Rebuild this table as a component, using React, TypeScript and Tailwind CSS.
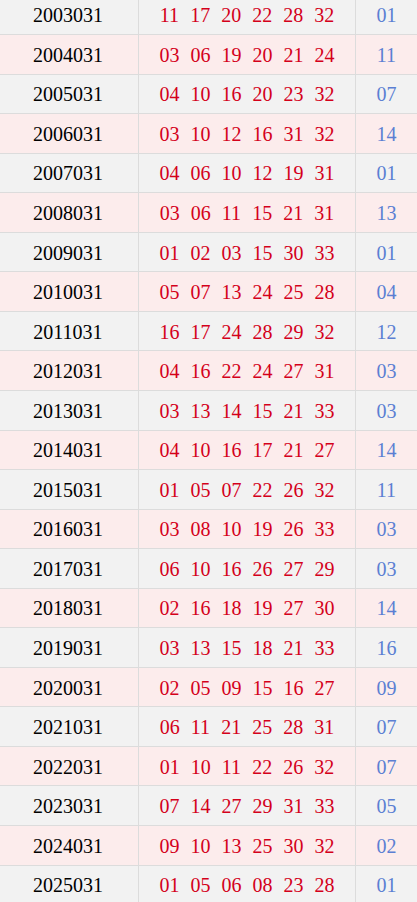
const rows: [string, string[], string][] = [
  ['2003031', ['11', '17', '20', '22', '28', '32'], '01'],
  ['2004031', ['03', '06', '19', '20', '21', '24'], '11'],
  ['2005031', ['04', '10', '16', '20', '23', '32'], '07'],
  ['2006031', ['03', '10', '12', '16', '31', '32'], '14'],
  ['2007031', ['04', '06', '10', '12', '19', '31'], '01'],
  ['2008031', ['03', '06', '11', '15', '21', '31'], '13'],
  ['2009031', ['01', '02', '03', '15', '30', '33'], '01'],
  ['2010031', ['05', '07', '13', '24', '25', '28'], '04'],
  ['2011031', ['16', '17', '24', '28', '29', '32'], '12'],
  ['2012031', ['04', '16', '22', '24', '27', '31'], '03'],
  ['2013031', ['03', '13', '14', '15', '21', '33'], '03'],
  ['2014031', ['04', '10', '16', '17', '21', '27'], '14'],
  ['2015031', ['01', '05', '07', '22', '26', '32'], '11'],
  ['2016031', ['03', '08', '10', '19', '26', '33'], '03'],
  ['2017031', ['06', '10', '16', '26', '27', '29'], '03'],
  ['2018031', ['02', '16', '18', '19', '27', '30'], '14'],
  ['2019031', ['03', '13', '15', '18', '21', '33'], '16'],
  ['2020031', ['02', '05', '09', '15', '16', '27'], '09'],
  ['2021031', ['06', '11', '21', '25', '28', '31'], '07'],
  ['2022031', ['01', '10', '11', '22', '26', '32'], '07'],
  ['2023031', ['07', '14', '27', '29', '31', '33'], '05'],
  ['2024031', ['09', '10', '13', '25', '30', '32'], '02'],
  ['2025031', ['01', '05', '06', '08', '23', '28'], '01'],
];

export default function App() {
  return (
    <div className="h-[902px] w-[417px] overflow-hidden bg-[#f2f2f2] font-['Liberation_Serif','Noto_Sans_CJK_SC',serif] text-[20px]">
      <div className="-mt-[4.5px]">
        {rows.map(([issue, reds, blue], i) => (
          <div
            key={issue}
            className={
              'flex h-[39.55px] border-b border-[#dcdcdc] ' + (i % 2 === 0 ? 'bg-[#f2f2f2]' : 'bg-[#fcecec]')
            }
          >
            <div className="flex w-[139px] shrink-0 items-center justify-center border-r border-[#dcdcdc] pt-[1px] pr-[2px] text-[#000]">
              {issue}
            </div>
            <div className="flex w-[217px] shrink-0 items-center justify-center gap-[11px] border-r border-[#dcdcdc] pt-[1px] text-[#d4001a]">
              {reds.map((n, j) => (
                <span key={j}>{n}</span>
              ))}
            </div>
            <div className="flex flex-1 items-center justify-center pt-[1px] text-[#5b7fd3]">{blue}</div>
          </div>
        ))}
      </div>
    </div>
  );
}
